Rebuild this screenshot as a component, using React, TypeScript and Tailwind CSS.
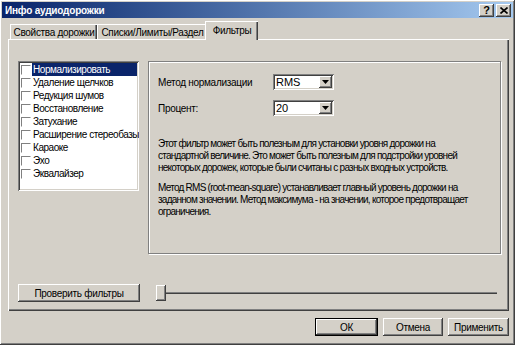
import type { ReactNode } from "react";

const raised =
  "bg-[#d4d0c8] shadow-[inset_-1px_-1px_#404040,inset_1px_1px_#ffffff,inset_-2px_-2px_#808080,inset_2px_2px_#d4d0c8]";
const sunken =
  "bg-white shadow-[inset_1px_1px_#808080,inset_-1px_-1px_#ffffff,inset_2px_2px_#404040,inset_-2px_-2px_#d4d0c8]";

const filters = [
  "Нормализировать",
  "Удаление щелчков",
  "Редукция шумов",
  "Восстановление",
  "Затухание",
  "Расширение стереобазы",
  "Караоке",
  "Эхо",
  "Эквалайзер",
];

function Button({ children, w, def }: { children: ReactNode; w: string; def?: boolean }) {
  return (
    <div className={`${w} h-[18px] ${def ? "border border-black" : ""}`}>
      <div className={`${raised} flex h-full w-full items-center justify-center text-[10px] tracking-[-0.3px] text-black`}>
        {children}
      </div>
    </div>
  );
}

function Select({ value }: { value: string }) {
  return (
    <div className={`${sunken} flex h-[16px] w-[61px] items-center p-[2px]`}>
      <span className="flex-1 pl-[1px] text-[11px] leading-none">{value}</span>
      <div className={`${raised} flex h-[12px] w-[13px] items-center justify-center`}>
        <svg width="7" height="4" viewBox="0 0 7 4">
          <path d="M0 0h7L3.5 4z" fill="#000" />
        </svg>
      </div>
    </div>
  );
}

function Tab({ label, w, active }: { label: string; w: string; active?: boolean }) {
  return (
    <div
      className={`${w} flex items-center justify-center border-l border-t border-white shadow-[inset_-1px_0_#404040,inset_-2px_0_#808080] ${
        active ? "relative z-10 -mx-[2px] -mb-px h-[19px] bg-[#d4d0c8] pb-[2px]" : "h-[15px]"
      }`}
    >
      <span className="text-[10px] tracking-[-0.3px] whitespace-nowrap">{label}</span>
    </div>
  );
}

export default function App() {
  return (
    <div
      className="flex h-[345px] w-[515px] flex-col bg-[#d4d0c8] text-black shadow-[inset_-1px_-1px_#404040,inset_1px_1px_#ffffff,inset_-2px_-2px_#808080]"
      style={{ fontFamily: '"Liberation Sans", Arial, sans-serif' }}
    >
      {/* title bar */}
      <div className="m-[2px] mb-0 flex h-[16px] items-center justify-between bg-gradient-to-r from-[#0a246a] to-[#a6caf0] pl-[3px] pr-[2px]">
        <span className="text-[10px] font-bold tracking-[-0.2px] text-white">Инфо аудиодорожки</span>
        <div className="flex gap-[2px]">
          <div className={`${raised} flex h-[13px] w-[15px] items-center justify-center text-[11px] font-bold leading-none`}>?</div>
          <div className={`${raised} flex h-[13px] w-[15px] items-center justify-center`}>
            <svg width="8" height="7" viewBox="0 0 8 7">
              <path d="M0.5 0.5l7 6M7.5 0.5l-7 6" stroke="#000" strokeWidth="1.6" />
            </svg>
          </div>
        </div>
      </div>

      {/* tabs */}
      <div className="ml-[10px] mt-[3px] flex items-end">
        <Tab label="Свойства дорожки" w="w-[87px]" />
        <Tab label="Списки/Лимиты/Раздел" w="w-[110px]" />
        <Tab label="Фильтры" w="w-[53px]" active />
      </div>

      {/* tab panel */}
      <div className="ml-[8px] flex h-[272px] w-[501px] flex-col border-l border-t border-white pl-[9px] pr-[8px] pt-[21px] shadow-[inset_-1px_-1px_#404040,inset_-2px_-2px_#808080]">
        <div className="flex gap-[9px]">
          {/* filter list */}
          <div className={`${sunken} h-[130px] w-[121px] shrink-0 overflow-hidden p-[2px]`}>
            {filters.map((f, i) => (
              <div key={f} className="flex h-[13px] items-center">
                <div className="ml-[1px] h-[10px] w-[10px] shrink-0 border border-[#808080] border-b-white border-r-white bg-white" />
                <span
                  className={`ml-px flex h-[13px] min-w-0 flex-1 items-center pl-[1px] text-[10px] tracking-[-0.45px] whitespace-nowrap ${
                    i === 0 ? "bg-[#0a246a] text-white" : ""
                  }`}
                >
                  {f}
                </span>
              </div>
            ))}
          </div>

          {/* options group */}
          <div className="h-[193px] w-[354px] border border-[#808080] px-[9px] pt-[12px] shadow-[inset_1px_1px_#ffffff,1px_1px_#ffffff]">
            <div className="flex items-center">
              <span className="w-[115px] text-[10px] tracking-[-0.3px]">Метод нормализации</span>
              <Select value="RMS" />
            </div>
            <div className="mt-[10px] flex items-center">
              <span className="w-[115px] text-[10px] tracking-[-0.3px]">Процент:</span>
              <Select value="20" />
            </div>
            <p className="mt-[22px] whitespace-nowrap text-[10px] leading-[12px] tracking-[-0.75px]">
              Этот фильтр может быть полезным для установки уровня дорожки на
              <br />
              стандартной величине. Это может быть полезным для подстройки уровней
              <br />
              некоторых дорожек, которые были считаны с разных входных устройств.
            </p>
            <p className="mt-[8px] whitespace-nowrap text-[10px] leading-[12px] tracking-[-0.75px]">
              Метод RMS (root-mean-square) устанавливает главный уровень дорожки на
              <br />
              заданном значении. Метод максимума - на значении, которое предотвращает
              <br />
              ограничения.
            </p>
          </div>
        </div>

        {/* test row */}
        <div className="mt-[30px] flex items-center gap-[16px]">
          <Button w="w-[122px]">Проверить фильтры</Button>
          <div className="flex flex-1 items-center pr-[4px]">
            <div className={`${raised} h-[16px] w-[10px]`} />
            <div className="h-[2px] flex-1 border-t border-[#808080] border-b-white bg-[#404040]" />
          </div>
        </div>
      </div>

      {/* dialog buttons */}
      <div className="mr-[6px] mt-[7px] flex justify-end gap-[5px]">
        <Button w="w-[63px]" def>
          ОК
        </Button>
        <Button w="w-[60px]">Отмена</Button>
        <Button w="w-[61px]">Применить</Button>
      </div>
    </div>
  );
}
